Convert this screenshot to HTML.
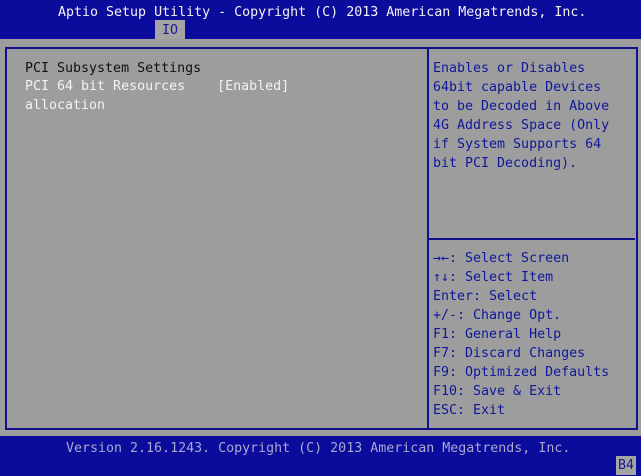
<!DOCTYPE html>
<html><head><meta charset="utf-8"><style>
*{margin:0;padding:0}
body{width:641px;height:476px;background:#9d9d9d;position:relative;overflow:hidden;font-family:"DejaVu Sans Mono","Liberation Mono",monospace;font-size:13.3px;line-height:19px}
.t{position:absolute;white-space:pre}
#top{position:absolute;left:0;top:0;width:641px;height:39px;background:#0c0c9c}
#bot{position:absolute;left:0;top:436px;width:641px;height:40px;background:#0c0c9c}
#tab{position:absolute;left:155px;top:20px;width:30px;height:19px;background:#a4a4a4}
#frame{position:absolute;left:5px;top:47px;width:629px;height:379px;border:2px solid #10108a}
#div{position:absolute;left:427px;top:47px;width:2px;height:381px;background:#10108a}
#hl{position:absolute;left:429px;top:238px;width:206px;height:2px;background:#10108a}
.w{color:#f2f2f2}.k{color:#111}.b{color:#10189a}
</style></head><body>
<div id="top"></div><div id="tab"></div>
<div class="t w" style="left:58px;top:3px">Aptio Setup Utility - Copyright (C) 2013 American Megatrends, Inc.</div>
<div class="t" style="left:162px;top:21px;color:#1a1a8a">IO</div>
<div id="frame"></div><div id="div"></div><div id="hl"></div>
<div class="t k" style="left:25px;top:59px">PCI Subsystem Settings</div>
<div class="t w" style="left:25px;top:77px">PCI 64 bit Resources    [Enabled]</div>
<div class="t w" style="left:25px;top:96px">allocation</div>
<div class="t b" style="left:433px;top:59px">Enables or Disables
64bit capable Devices
to be Decoded in Above
4G Address Space (Only
if System Supports 64
bit PCI Decoding).</div>
<div class="t b" style="left:433px;top:249px">→←: Select Screen
↑↓: Select Item
Enter: Select
+/-: Change Opt.
F1: General Help
F7: Discard Changes
F9: Optimized Defaults
F10: Save &amp; Exit
ESC: Exit</div>
<div id="bot"></div>
<div class="t" style="left:66px;top:439px;color:#a8a8d0">Version 2.16.1243. Copyright (C) 2013 American Megatrends, Inc.</div>
<div class="t" style="left:616px;top:456px;width:20px;height:19px;background:#a4a4a4;color:#1a1a8a;text-align:center">B4</div>
</body></html>
